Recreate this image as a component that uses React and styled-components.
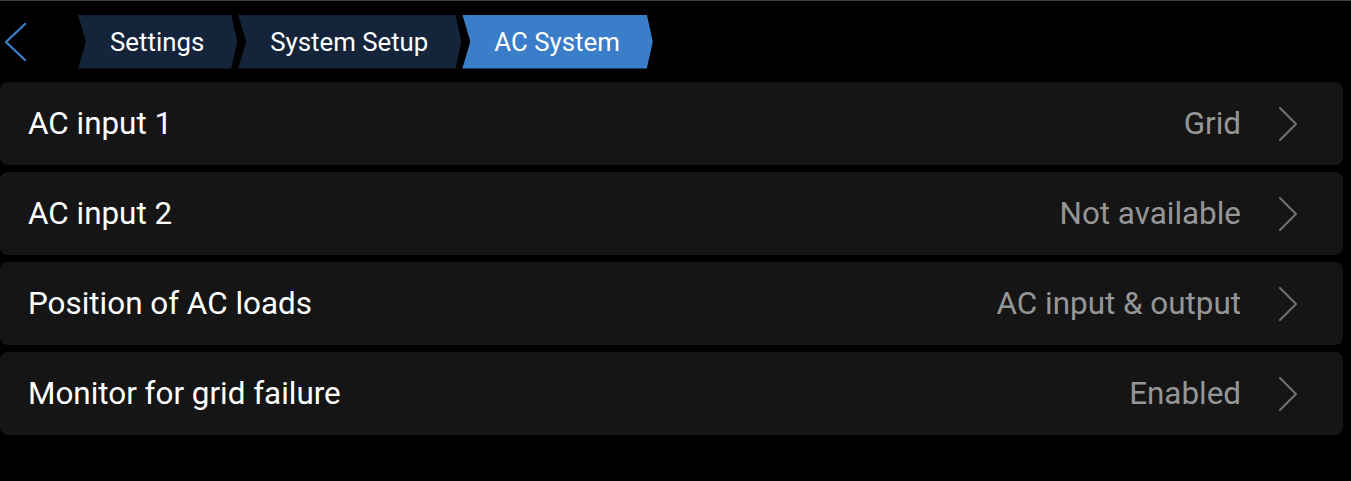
import React from 'react';
import styled, { createGlobalStyle } from 'styled-components';

const GlobalStyle = createGlobalStyle`
  html, body {
    margin: 0;
    padding: 0;
    background: #000;
    font-family: Roboto, "Noto Sans", sans-serif;
  }
`;

const Page = styled.div`
  width: 1351px;
  height: 481px;
  background: #000;
  border-top: 1px solid #3c3c3c;
  box-sizing: border-box;
  overflow: hidden;
`;

const Header = styled.div`
  display: flex;
  align-items: center;
  height: 81px;
`;

const BackButton = styled.button`
  display: flex;
  align-items: center;
  justify-content: center;
  width: 30px;
  height: 54px;
  margin-left: 1px;
  margin-right: 47px;
  padding: 0;
  border: none;
  background: none;
  cursor: pointer;
`;

const Crumbs = styled.div`
  display: flex;
  gap: 1px;
`;

const Crumb = styled.div`
  display: flex;
  align-items: center;
  height: 54px;
  padding: 0 33px 0 32px;
  font-size: 25.8px;
  color: #fff;
  background: ${(p) => (p.$active ? '#3a7dc9' : '#14253b')};
  clip-path: polygon(0 0, calc(100% - 6px) 0, 100% 50%, calc(100% - 6px) 100%, 0 100%, 8px 50%);
`;

const List = styled.div`
  display: flex;
  flex-direction: column;
  gap: 7px;
  padding-right: 8px;
`;

const Row = styled.div`
  display: flex;
  align-items: center;
  height: 83px;
  padding: 0 45px 0 28px;
  background: #151515;
  border-radius: 8px;
`;

const Label = styled.div`
  flex: 1;
  font-size: 31.4px;
  color: #fff;
`;

const Value = styled.div`
  font-size: 31.4px;
  color: #969696;
  margin-right: 37px;
`;

const Chevron = () => (
  <svg width="20" height="36" viewBox="0 0 20 36">
    <path d="M2 2 L18 18 L2 34" fill="none" stroke="#6e6e6e" strokeWidth="2.2" strokeLinecap="round" strokeLinejoin="round" />
  </svg>
);

const rows = [
  ['AC input 1', 'Grid'],
  ['AC input 2', 'Not available'],
  ['Position of AC loads', 'AC input & output'],
  ['Monitor for grid failure', 'Enabled'],
];

export default function App() {
  return (
    <>
      <GlobalStyle />
      <Page>
        <Header>
          <BackButton>
            <svg width="26" height="40" viewBox="0 0 26 40">
              <path d="M22 2 L3 20 L22 38" fill="none" stroke="#3a7dc9" strokeWidth="2.4" strokeLinecap="round" strokeLinejoin="round" />
            </svg>
          </BackButton>
          <Crumbs>
            <Crumb>Settings</Crumb>
            <Crumb>System Setup</Crumb>
            <Crumb $active>AC System</Crumb>
          </Crumbs>
        </Header>
        <List>
          {rows.map(([label, value]) => (
            <Row key={label}>
              <Label>{label}</Label>
              <Value>{value}</Value>
              <Chevron />
            </Row>
          ))}
        </List>
      </Page>
    </>
  );
}
